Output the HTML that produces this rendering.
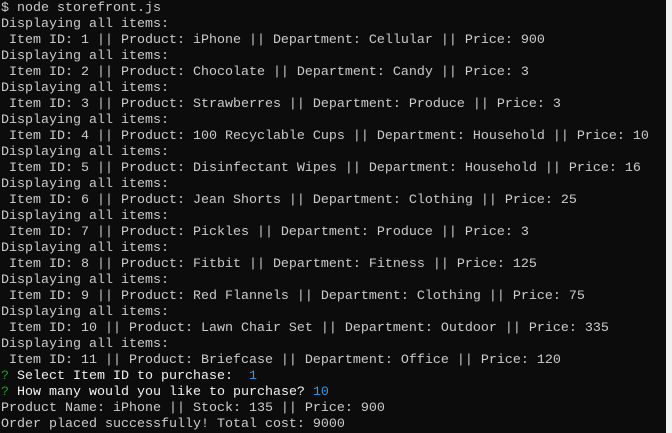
<!DOCTYPE html>
<html><head><style>
html,body{margin:0;padding:0;background:#0c0c0c;width:672px;height:433px;overflow:hidden;position:relative}
pre{margin:0;padding:1px 0 0 1px;font-family:"Liberation Mono",monospace;font-size:13.33px;line-height:16px;color:#cccccc;white-space:pre}
.g{color:#13a10e}.c{color:#3a96dd}.w{color:#f2f2f2}
.strip{position:absolute;left:666px;top:0;width:6px;height:433px;background:#f0f0f0}
</style></head><body><pre>$ node storefront.js
Displaying all items:
 Item ID: 1 || Product: iPhone || Department: Cellular || Price: 900
Displaying all items:
 Item ID: 2 || Product: Chocolate || Department: Candy || Price: 3
Displaying all items:
 Item ID: 3 || Product: Strawberres || Department: Produce || Price: 3
Displaying all items:
 Item ID: 4 || Product: 100 Recyclable Cups || Department: Household || Price: 10
Displaying all items:
 Item ID: 5 || Product: Disinfectant Wipes || Department: Household || Price: 16
Displaying all items:
 Item ID: 6 || Product: Jean Shorts || Department: Clothing || Price: 25
Displaying all items:
 Item ID: 7 || Product: Pickles || Department: Produce || Price: 3
Displaying all items:
 Item ID: 8 || Product: Fitbit || Department: Fitness || Price: 125
Displaying all items:
 Item ID: 9 || Product: Red Flannels || Department: Clothing || Price: 75
Displaying all items:
 Item ID: 10 || Product: Lawn Chair Set || Department: Outdoor || Price: 335
Displaying all items:
 Item ID: 11 || Product: Briefcase || Department: Office || Price: 120
<span class="g">?</span> <span class="w">Select Item ID to purchase:</span>  <span class="c">1</span>
<span class="g">?</span> <span class="w">How many would you like to purchase?</span> <span class="c">10</span>
Product Name: iPhone || Stock: 135 || Price: 900
Order placed successfully! Total cost: 9000</pre><div class="strip"></div></body></html>
